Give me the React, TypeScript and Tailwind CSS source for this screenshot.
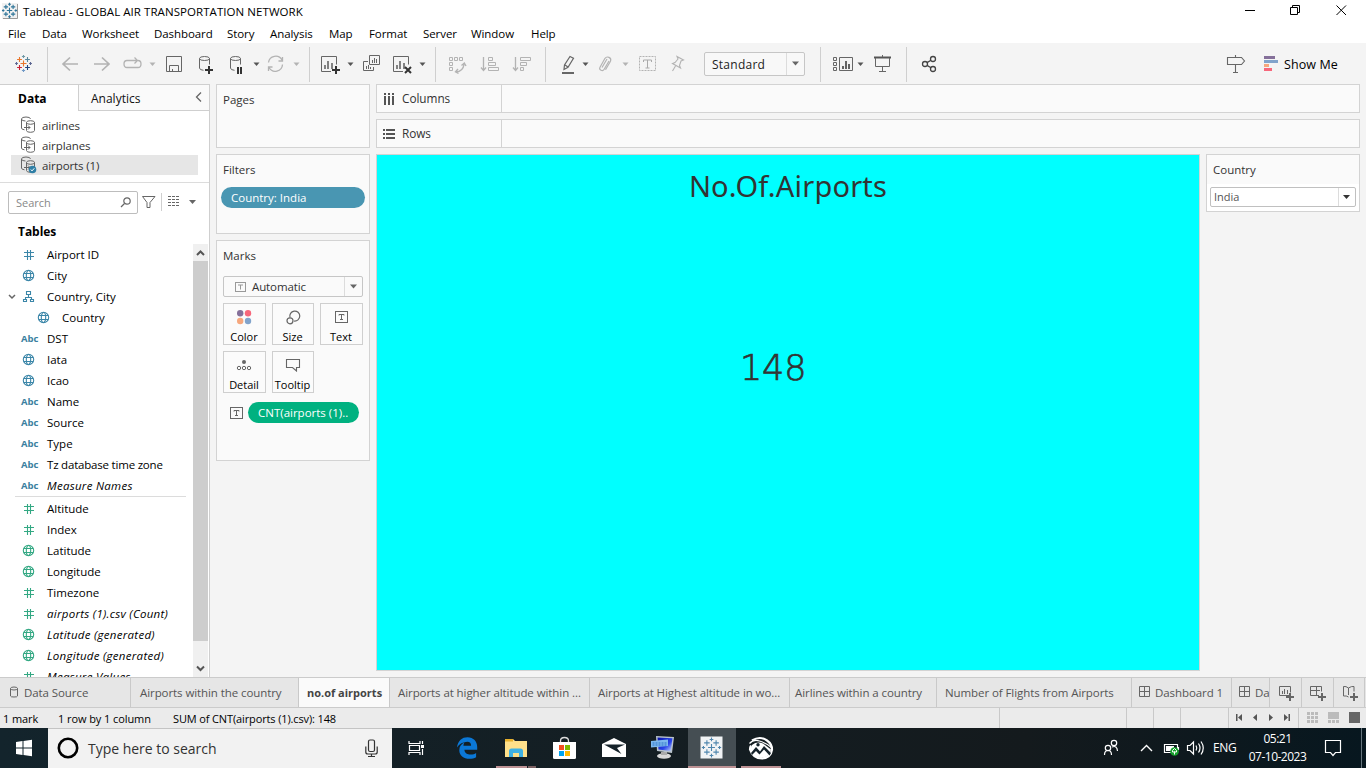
import React from 'react';

type SegProps = { x: number; y: number; w: number; h: number; className?: string; children?: React.ReactNode };

/** A slice of the icon sheet; children are drawn in sheet coordinates. */
function Seg({ x, y, w, h, className = '', children }: SegProps) {
  return (
    <svg width={w} height={h} viewBox={`${x} ${y} ${w} ${h}`} className={`block shrink-0 ${className}`} fill="none">
      {children}
    </svg>
  );
}

function Bar({ x, w, children }: { x: number; w: number; children?: React.ReactNode }) {
  return (
    <Seg x={x} y={43} w={w} h={41}>
      {children}
    </Seg>
  );
}

const Caret = ({ x, y, c = '#555' }: { x: number; y: number; c?: string }) => (
  <path d={`M${x - 3} ${y - 1.5}h6l-3 3.5z`} fill={c} />
);
const Divider = ({ x }: { x: number }) => <path d={`M${x + 0.5} 47V82`} stroke="#cfcfcf" />;

const crosses: [number, number, number, string][] = [
  [0, 0, 3, '#e8762c'],
  [-4, -4, 2.4, '#e8762c'],
  [4, -4, 2.4, '#59879b'],
  [-4, 4, 2.4, '#c72035'],
  [4, 4, 2.4, '#1f447e'],
  [0, -7, 1.6, '#7099a6'],
  [0, 7, 1.6, '#7099c6'],
  [-7, 0, 1.4, '#5b6591'],
  [7, 0, 1.4, '#5b6591'],
];

function Crosses({ cx, cy, s = 1, mono }: { cx: number; cy: number; s?: number; mono?: string }) {
  return (
    <g strokeWidth={1.1}>
      {crosses.map(([dx, dy, r, c], i) => (
        <path
          key={i}
          stroke={mono ?? c}
          d={`M${cx + dx * s - r * s} ${cy + dy * s}h${2 * r * s}M${cx + dx * s} ${cy + dy * s - r * s}v${2 * r * s}`}
        />
      ))}
    </g>
  );
}

const Cylinder = ({ x, y }: { x: number; y: number }) => (
  <g stroke="#666">
    <ellipse cx={x + 5.5} cy={y + 2.5} rx="5" ry="2" />
    <path d={`M${x + 0.5} ${y + 2.5}v9.5q0 2 4 2.3M${x + 10.5} ${y + 2.5}v6`} />
  </g>
);

const ChartBox = ({ x, y }: { x: number; y: number }) => (
  <g>
    <path d={`M${x + 10} ${y + 15.5}h-9.5v-15h15v8`} stroke="#666" />
    <path d={`M${x + 4} ${y + 13}v-4M${x + 7} ${y + 13}v-8M${x + 11} ${y + 13}v-6`} stroke="#666" strokeWidth="1.6" />
  </g>
);

const menu: [string, string][] = [
  ['File', 'w-[34px]'],
  ['Data', 'w-[40px]'],
  ['Worksheet', 'w-[72px]'],
  ['Dashboard', 'w-[73px]'],
  ['Story', 'w-[43px]'],
  ['Analysis', 'w-[59px]'],
  ['Map', 'w-[40px]'],
  ['Format', 'w-[54px]'],
  ['Server', 'w-[48px]'],
  ['Window', 'w-[60px]'],
  ['Help', 'w-[40px]'],
];

function TitleBar() {
  return (
    <header className="flex h-[22px] shrink-0 bg-white">
      <Seg x={0} y={0} w={23} h={22}>
        <rect x="2" y="3" width="16" height="16" fill="#f1f1f1" />
        <path d="M3 18.5H17.5V4" stroke="#999" />
        <Crosses cx={9.5} cy={10.5} s={0.9} mono="#2f7599" />
      </Seg>
      <span className="flex-1 pt-[3px] text-[11.5px] leading-[17px] tracking-[0.06px] text-black">Tableau - GLOBAL AIR TRANSPORTATION NETWORK</span>
      <Seg x={1236} y={0} w={130} h={22}>
        <g stroke="#000">
          <path d="M1245 10.500h10M1290.500 7.500h7v7h-7zM1292.500 7V5.500h7v7H1298M1336.500 5.500l9.500 9.500M1346 5.500l-9.500 9.500" />
        </g>
      </Seg>
    </header>
  );
}

function Toolbar() {
  return (
    <div className="flex h-[41px] shrink-0 bg-[#f4f4f4]">
      <Bar x={0} w={55}>
        <Crosses cx={23.5} cy={63.5} />
        <Divider x={47} />
      </Bar>
      <Bar x={55} w={105}>
        <g stroke="#b3b3b3" strokeWidth="1.7">
          <path d="M78 64H63M70 57.500L63 64L70 70.500M94 64h15M102 57.500L109 64L102 70.500" />
        </g>
        <path d="M132 60.500h-5q-3 0-3 3.500t3 3.500h11q3 0 3-3.500t-3-3.500M131 60.500h6M134.500 57.500l3 3l-3 3" stroke="#b3b3b3" strokeWidth="1.3" />
        <Caret x={152.500} y={64} c="#b3b3b3" />
      </Bar>
      <Bar x={160} w={30}>
        <path d="M166.500 56.500h15v15h-15zM169.500 71v-5.500h9V71M172.500 71v-2" stroke="#666" />
      </Bar>
      <Bar x={190} w={70}>
        <Cylinder x={199} y={56} />
        <path d="M205 70h8M209 66v8" stroke="#333" strokeWidth="2" />
        <Cylinder x={230} y={56} />
        <path d="M238 67v7M241 67v7" stroke="#333" strokeWidth="2" />
        <Caret x={256.500} y={64} />
      </Bar>
      <Bar x={260} w={55}>
        <g stroke="#b3b3b3" strokeWidth="1.3">
          <path d="M268.500 62.500a7.200 7.200 0 0 1 13.500-2.500M282.500 64.500a7.200 7.200 0 0 1-13.500 3M282.500 57v4h-4M268.500 71v-4h4" />
        </g>
        <Caret x={296.500} y={64} c="#b3b3b3" />
        <Divider x={309} />
      </Bar>
      <Bar x={315} w={125}>
        <ChartBox x={321} y={56} />
        <path d="M332 70h8M336 66v8" stroke="#333" strokeWidth="2" />
        <Caret x={350.500} y={64} />
        <path d="M369.500 55.500h10v9h-10zM368 61.500h-4.500v9h10V67" stroke="#666" />
        <path d="M372.500 63v-3M374.500 63v-5M376.500 63v-4M366.500 69v-3M368.500 69v-4M370.500 69v-2" stroke="#666" />
        <ChartBox x={393} y={56} />
        <path d="M405 67l6 6M411 67l-6 6" stroke="#333" strokeWidth="2" />
        <Caret x={422.500} y={64} />
        <Divider x={435} />
      </Bar>
      <Bar x={440} w={111}>
        <g stroke="#b3b3b3">
          <path d="M449.500 57.500h3v3h-3zM454.500 57.500h3v3h-3zM459.500 57.500h3v3h-3zM449.500 62.500h3v3h-3zM449.500 67.500h3v3h-3z" />
          <path d="M464 64.500q-1 7-8 7.500M461.500 65.500l2.800-2.500l1.700 3M458 69l-2.500 2.800l3 1.700" strokeWidth="1.400" />
          <path d="M483.500 57v13M481 67.500l2.500 3l2.500-3M515.500 57v13M513 67.500l2.500 3l2.500-3" strokeWidth="1.300" />
          <path d="M488.500 57.500h4v3h-4zM488.500 62.500h7v3h-7zM488.500 67.500h10v3h-10zM520.500 57.500h10v3h-10zM520.500 62.500h6v3h-6zM520.500 67.500h3v3h-3z" />
        </g>
        <Divider x={545} />
      </Bar>
      <Bar x={551} w={153}>
        <path d="M570 56.500l3.500 1.800l-5.500 9l-4 2.200l.5-4.500zM565 65l3 2" stroke="#666" strokeWidth="1.200" />
        <path d="M562 73h12" stroke="#666" strokeWidth="2" />
        <Caret x={585.500} y={64} />
        <path d="M609 61l-5 8.500q-1 1.800-3 .8t-1-3l5-9q1.500-2 4-.9t1.500 3.800l-5 8.500M607 59l-5 8.500" stroke="#b3b3b3" strokeWidth="1.200" />
        <Caret x={625.500} y={64} c="#b3b3b3" />
        <rect x="639.500" y="56.500" width="16" height="14" stroke="#b3b3b3" strokeDasharray="2 1" />
        <path d="M643.500 62v-2h8v2M647.500 60v8M645.500 68h4" stroke="#aaa" />
        <path d="M677 56.500l6.500 3.500l-2.500 1l-1.500 4.500l1 2.500l-8-4.500l2.500-1l3-3.500zM675.500 66l-3 5" stroke="#b3b3b3" strokeWidth="1.100" />
      </Bar>
      <div className="mt-[9px] flex h-[24px] w-[101px] shrink-0 rounded-[2px] border border-[#c6c6c6] bg-[#f8f8f8]">
        <span className="w-[82px] border-r border-[#dcdcdc] pl-[7px] text-[12px] leading-[23px] tracking-[0.250px] text-[#222]">Standard</span>
        <Seg x={787} y={53} w={17} h={21}>
          <path d="M792 61.500h7l-3.500 4z" fill="#666" />
        </Seg>
      </div>
      <Bar x={805} w={150}>
        <Divider x={820} />
        <path d="M833.500 57.500h3v3h-3zM833.500 62.500h3v3h-3zM833.500 67.500h3v3h-3zM839.500 57.500h13v13h-13z" stroke="#666" />
        <path d="M843 69v-3M846 69v-8M849 69v-5" stroke="#555" strokeWidth="1.800" />
        <Caret x={860.500} y={64} />
        <path d="M874 57.500h17" stroke="#555" strokeWidth="2" />
        <path d="M875.500 58v8.500h14V58M882.500 55v2M882.500 67v5M879 71.500h7" stroke="#666" />
        <Divider x={906} />
        <g stroke="#444" strokeWidth="1.300">
          <circle cx="925" cy="64" r="2.500" />
          <circle cx="933" cy="59" r="2.500" />
          <circle cx="933" cy="69" r="2.500" />
          <path d="M927 62.600l4-2.400M927 65.400l4 2.400" />
        </g>
      </Bar>
      <div className="flex-1" />
      <Bar x={1216} w={68}>
        <path d="M1227.500 57.500h14l3 3.500l-3 3.500h-14zM1235.500 55v2M1235.500 65v7M1233 72.500h5" stroke="#666" strokeWidth="1.100" />
        <path d="M1264 56h11v3h-11z" fill="#85709a" />
        <path d="M1264 60h14v3h-14z" fill="#81a3cb" />
        <path d="M1264 64h5v3h-5z" fill="#f6a77d" />
        <path d="M1264 68h8v3h-8z" fill="#f7677b" />
      </Bar>
      <span className="w-[82px] shrink-0 pt-px text-[12.500px] leading-[42px] tracking-[0.100px] text-black">Show Me</span>
    </div>
  );
}

type Kind = 'num' | 'geo' | 'abc' | 'tree';
type Field = { name: string; kind: Kind; italic?: boolean; child?: boolean; open?: boolean; tight?: boolean };

const dims: Field[] = [
  { name: 'Airport ID', kind: 'num' },
  { name: 'City', kind: 'geo' },
  { name: 'Country, City', kind: 'tree', open: true },
  { name: 'Country', kind: 'geo', child: true },
  { name: 'DST', kind: 'abc' },
  { name: 'Iata', kind: 'geo' },
  { name: 'Icao', kind: 'geo' },
  { name: 'Name', kind: 'abc' },
  { name: 'Source', kind: 'abc' },
  { name: 'Type', kind: 'abc' },
  { name: 'Tz database time zone', kind: 'abc', tight: true },
  { name: 'Measure Names', kind: 'abc', italic: true },
];
const measures: Field[] = [
  { name: 'Altitude', kind: 'num' },
  { name: 'Index', kind: 'num' },
  { name: 'Latitude', kind: 'geo' },
  { name: 'Longitude', kind: 'geo' },
  { name: 'Timezone', kind: 'num' },
  { name: 'airports (1).csv (Count)', kind: 'num', italic: true },
  { name: 'Latitude (generated)', kind: 'geo', italic: true },
  { name: 'Longitude (generated)', kind: 'geo', italic: true },
  { name: 'Measure Values', kind: 'num', italic: true },
];

function FieldRow({ f, color }: { f: Field; color: string }) {
  return (
    <div className={`flex h-[21px] shrink-0 items-center ${f.child ? 'pl-[15px]' : ''}`}>
      <span className="flex w-[21px] justify-center pl-[2px]">
        {f.open && (
          <svg width="8" height="6" fill="none">
            <path d="M1 1l3 3l3-3" stroke="#666" strokeWidth="1.500" />
          </svg>
        )}
      </span>
      <span className="w-[26px] shrink-0">
        {f.kind === 'abc' ? (
          <span className="block text-[9.500px] font-bold leading-[21px] text-[#3b7f9f]">Abc</span>
        ) : (
          <svg width="16" height="14" fill="none" stroke={color} strokeWidth="1.100">
            {f.kind === 'num' && <path d="M6.500 2v10M9.500 2v10M3 4.500h10M3 8.500h10" />}
            {f.kind === 'geo' && (
              <>
                <circle cx="7.500" cy="6.500" r="5.200" />
                <ellipse cx="7.500" cy="6.500" rx="2.200" ry="5" />
                <path d="M3 4.500h9M3 8.500h9" />
              </>
            )}
            {f.kind === 'tree' && <path d="M5.500 1.500h4v3h-4zM7.500 4.500v3M4.500 9.500v-2h6v2M2.500 9.500h3v2h-3zM9.500 9.500h3v2h-3z" />}
          </svg>
        )}
      </span>
      <span
        className={`whitespace-nowrap pt-px text-[11.500px] leading-[20px] text-black ${f.italic ? 'italic tracking-[0.280px]' : ''} ${f.tight ? 'tracking-[-0.200px]' : ''}`}
      >
        {f.name}
      </span>
    </div>
  );
}

function SourceRow({ name, active }: { name: string; active?: boolean }) {
  return (
    <div className={`ml-[11px] flex h-5 w-[187px] items-center ${active ? 'bg-[#e6e6e6]' : ''}`}>
      <svg width="31" height="20" fill="none" stroke="#666">
        <path d="M14.500 5q0-2-4.500-2t-4.500 2v9q0 1.500 3 1.800M5.500 5q0 2 4 2" transform="translate(5 -1)" />
        <path d="M16.500 7.500q0-1.800 4-1.800t4 1.800v8q0 1.800-4 1.800t-4-1.800zM16.500 7.500q0 1.800 4 1.800t4-1.800M14 12.500h6M18 10.500l2 2l-2 2" transform="translate(-1 0)" />
        {active && (
          <>
            <circle cx="21.500" cy="14.500" r="3.800" fill="#2f7fa6" stroke="none" />
            <path d="M19.800 14.500l1.200 1.400l2.300-2.600" stroke="#fff" />
          </>
        )}
      </svg>
      <span className="pt-px text-[11.500px] tracking-[-0.100px] text-[#333]">{name}</span>
    </div>
  );
}

function DataPane() {
  return (
    <aside className="flex w-[210px] shrink-0 flex-col overflow-hidden border-r border-t border-[#cfcfcf] bg-white">
      <div className="flex h-[26px] shrink-0">
        <span className="w-[78px] pl-[18px] text-[12px] font-bold leading-[27px] text-black">Data</span>
        <span className="flex flex-1 justify-between border-b border-l border-[#cfcfcf] bg-[#fafafa] pl-3 text-[12px] leading-[27px] text-[#111]">
          Analytics
          <svg width="18" height="24" fill="none" stroke="#666" strokeWidth="1.300">
            <path d="M10 7.500l-4.500 4.500l4.500 4.500" />
          </svg>
        </span>
      </div>
      <div className="h-[72px] shrink-0 border-b border-[#dcdcdc] pt-[4px]">
        <SourceRow name="airlines" />
        <SourceRow name="airplanes" />
        <SourceRow name="airports (1)" active />
      </div>
      <div className="flex h-[38px] shrink-0 pt-[8px]">
        <div className="ml-2 flex h-[23px] w-[130px] rounded-[2px] border border-[#bdbdbd] pl-[7px] text-[11px] leading-[22px] text-[#888]">
          <span className="flex-1">Search</span>
          <svg width="18" height="21" fill="none" stroke="#666" strokeWidth="1.200">
            <circle cx="8" cy="9" r="3.200" />
            <path d="M5.500 11.500l-3.500 3.500" />
          </svg>
        </div>
        <Seg x={138} y={191} w={70} h={24}>
          <path d="M142.500 196.500h12.500l-5 6v5h-3v-5z" stroke="#666" />
          <path d="M161.500 193v18" stroke="#cfcfcf" />
          <path d="M168 197.500h12M168 200.500h12M168 203.500h12M168 206.500h12" stroke="#666" strokeDasharray="3 1" transform="translate(0 -1)" />
          <path d="M189 200h7l-3.500 4z" fill="#666" />
        </Seg>
      </div>
      <div className="h-[23px] shrink-0 pl-[18px] text-[12px] font-bold leading-[21px] tracking-[-0.050px] text-black">Tables</div>
      <div className="flex min-h-0 flex-1">
        <div className="flex w-[193px] shrink-0 flex-col overflow-hidden">
          {dims.map((f) => (
            <FieldRow key={f.name} f={f} color="#3b86a8" />
          ))}
          <div className="ml-[15px] mr-[7px] h-px shrink-0 bg-[#dcdcdc]" />
          <div className="h-px shrink-0" />
          {measures.map((f) => (
            <FieldRow key={f.name} f={f} color="#33a883" />
          ))}
        </div>
        <div className="flex w-[15px] flex-col bg-[#f0f0f0]">
          <svg width="15" height="17" className="shrink-0" fill="none" stroke="#555" strokeWidth="2">
            <path d="M4 11l3.500-3.500l3.500 3.500" />
          </svg>
          <div className="h-[380px] shrink-0 bg-[#cdcdcd]" />
          <svg width="15" height="34" className="shrink-0" fill="none" stroke="#555" strokeWidth="2">
            <path d="M4 25.500l3.500 3.500l3.500-3.500" />
          </svg>
        </div>
      </div>
    </aside>
  );
}

const TBox = ({ c = '#666' }: { c?: string }) => (
  <svg width="13" height="12" fill="none" stroke={c}>
    <rect x=".5" y=".5" width="12" height="11" />
    <path d="M4 4.500v-1h5v1M6.500 3.500v5M5 8.500h3" />
  </svg>
);

function MarkButton({ label, wide, children }: { label: string; wide?: boolean; children: React.ReactNode }) {
  return (
    <button className={`flex h-[42px] flex-col items-center border border-[#cfcfcf] bg-[#fbfbfb] pr-px ${wide ? 'w-[43px]' : 'w-[42px]'}`}>
      <span className="flex h-[25px] items-center pt-px">{children}</span>
      <span className="whitespace-nowrap text-[11px] leading-[15px] text-black">{label}</span>
    </button>
  );
}

function Shelves() {
  return (
    <section className="flex w-[154px] shrink-0 flex-col gap-[6px] text-[11.500px] text-[#333]">
      <div className="h-[64px] border border-[#d3d3d3] bg-[#fafafa] pl-[6px] leading-[30px]">Pages</div>
      <div className="h-[80px] border border-[#d3d3d3] bg-[#fafafa]">
        <div className="h-[32px] pl-[6px] leading-[30px]">Filters</div>
        <div className="ml-[4px] h-[21px] w-[144px] rounded-full bg-[#4996b2] pl-[10px] text-[11.500px] leading-[21px] text-white">Country: India</div>
      </div>
      <div className="h-[221px] border border-[#d3d3d3] bg-[#fafafa] pl-[6px]">
        <div className="h-[35px] leading-[30px]">Marks</div>
        <div className="flex h-[21px] w-[140px] items-center rounded-[2px] border border-[#c6c6c6]">
          <span className="flex h-full w-[121px] items-center gap-[6px] border-r border-[#dcdcdc] pl-[11px] leading-[19px] tracking-[-0.100px]">
            <svg width="11" height="10" fill="none" stroke="#999">
              <rect x=".5" y=".5" width="10" height="9" />
              <path d="M3 3h5M5.500 3v4.500" />
            </svg>
            Automatic
          </span>
          <svg width="17" height="19">
            <path d="M5 7.500h7l-3.500 4z" fill="#666" />
          </svg>
        </div>
        <div className="mt-[6px] flex gap-[6px]">
          <MarkButton label="Color" wide>
            <svg width="16" height="16">
              <circle cx="4.200" cy="4.200" r="3.200" fill="#85709a" />
              <circle cx="12" cy="4.200" r="3.200" fill="#f7677b" />
              <circle cx="4.200" cy="12" r="3.200" fill="#f6a77d" />
              <circle cx="12" cy="12" r="3.200" fill="#81a3cb" />
            </svg>
          </MarkButton>
          <MarkButton label="Size">
            <svg width="16" height="16" fill="none" stroke="#666" strokeWidth="1.200">
              <path d="M5 8.500a5 5 0 1 1 4 3.500" />
              <circle cx="5" cy="11.800" r="3" />
            </svg>
          </MarkButton>
          <MarkButton label="Text" wide>
            <TBox />
          </MarkButton>
        </div>
        <div className="mt-[6px] flex gap-[6px]">
          <MarkButton label="Detail" wide>
            <svg width="16" height="12" fill="none" stroke="#666">
              <circle cx="8" cy="3" r="2" fill="#666" stroke="none" />
              <circle cx="3" cy="9" r="1.700" />
              <circle cx="8" cy="9" r="1.700" />
              <circle cx="13" cy="9" r="1.700" />
            </svg>
          </MarkButton>
          <MarkButton label="Tooltip">
            <svg width="16" height="14" fill="none" stroke="#666" strokeWidth="1.100">
              <path d="M1.500 1.500h13v8h-3v3.500l-4-3.500h-6z" />
            </svg>
          </MarkButton>
        </div>
        <div className="mt-[9px] flex items-center pl-[7px]">
          <TBox />
          <span className="ml-[5px] h-[21px] w-[111px] rounded-full bg-[#00b180] pl-[10px] text-[11.500px] leading-[21px] text-white">CNT(airports (1)..</span>
        </div>
      </div>
    </section>
  );
}

function Shelf({ label, children }: { label: string; children: React.ReactNode }) {
  return (
    <div className="flex h-[29px] shrink-0 border border-[#d3d3d3] bg-[#fafafa]">
      <span className="flex w-[125px] items-center gap-[6px] border-r border-[#d3d3d3] pl-[6px] text-[11.800px] tracking-[-0.050px] text-[#333]">
        <svg width="13" height="12" stroke="#555" fill="none" strokeWidth="2">
          {children}
        </svg>
        {label}
      </span>
    </div>
  );
}

function Workspace() {
  return (
    <main className="flex min-w-0 flex-1 flex-col pr-[6px]">
      <Shelf label="Columns">
        <path d="M2 0v2M6 0v2M10 0v2M2 3v9M6 3v9M10 3v9" />
      </Shelf>
      <div className="h-[6px]" />
      <Shelf label="Rows">
        <path d="M0 2h2M0 6h2M0 10h2M3 2h9M3 6h9M3 10h9" />
      </Shelf>
      <div className="mt-[6px] flex items-start gap-[6px]">
        <div className="flex h-[517px] w-[824px] flex-col border border-[#d3d3d3] bg-[#00ffff] text-[#333]">
          <div className="pt-[11px] text-center text-[29px] font-[450] leading-[40px] tracking-[0.200px]" style={{ fontFamily: '"Noto Sans", sans-serif' }}>
            No.Of.Airports
          </div>
          <div
            className="mt-[142px] pl-[363px] text-[35px] font-extralight leading-[40px] tracking-[-0.200px] [-webkit-text-stroke:0.700px_#333]"
            style={{ fontFamily: '"DejaVu Sans", sans-serif' }}
          >
            148
          </div>
        </div>
        <div className="h-[58px] w-[154px] border border-[#d3d3d3] bg-white text-[11.500px] text-[#333]">
          <div className="h-[29px] bg-[#fafafa] pl-[6px] leading-[30px]">Country</div>
          <div className="ml-[3px] mt-[3px] flex h-5 w-[146px] rounded-[2px] border border-[#c0c0c0]">
            <span className="w-[128px] border-r border-[#dcdcdc] pl-[3px] text-[11px] leading-[18px] text-[#555]">India</span>
            <svg width="16" height="18">
              <path d="M4 7h7l-3.500 4z" fill="#333" />
            </svg>
          </div>
        </div>
      </div>
    </main>
  );
}

const tabs: { name: string; w: string; pad: string; active?: boolean; icon?: 'db' | 'grid' }[] = [
  { name: 'Data Source', w: 'w-[131px]', pad: 'pl-[9px]', icon: 'db' },
  { name: 'Airports within the country', w: 'w-[168px]', pad: 'pl-[9px]' },
  { name: 'no.of airports', w: 'w-[91px]', pad: 'pl-[8px]', active: true },
  { name: 'Airports at higher altitude within ...', w: 'w-[200px]', pad: 'pl-[8px]' },
  { name: 'Airports at Highest altitude in wo...', w: 'w-[200px]', pad: 'pl-[8px]' },
  { name: 'Airlines within a country', w: 'w-[147px]', pad: 'pl-[5px]' },
  { name: 'Number of Flights from Airports', w: 'w-[195px]', pad: 'pl-[8px]' },
  { name: 'Dashboard 1', w: 'w-[100px]', pad: 'pl-[6px]', icon: 'grid' },
  { name: 'Da', w: 'w-[38px]', pad: 'pl-[6px]', icon: 'grid' },
];

function SheetTabs() {
  return (
    <nav className="flex h-[31px] shrink-0 overflow-hidden border-b border-t border-[#cbcbcb] bg-[#e6e6e6] text-[11.500px] leading-[29px] tracking-[-0.080px] text-[#555]">
      {tabs.map((t) => (
        <span
          key={t.name}
          className={`flex shrink-0 items-center overflow-hidden whitespace-nowrap border-r border-[#c9c9c9] ${t.w} ${t.pad} ${t.active ? 'bg-[#fafafa] text-[11px] font-bold tracking-[0px] text-[#444]' : ''}`}
        >
          {t.icon === 'db' && (
            <svg width="9" height="12" className="mb-[2px] mr-[6px] shrink-0" fill="none" stroke="#666">
              <path d="M1.500 2.500q0-1.500 3.500-1.500t3.500 1.500v7.500q0 1-3.500 1t-3.500-1zM1.500 2.500q0 1.500 3.500 1.500t3.500-1.500" />
            </svg>
          )}
          {t.icon === 'grid' && (
            <svg width="12" height="12" className="mb-[2px] ml-[1px] mr-[4px] shrink-0" fill="none" stroke="#666">
              <path d="M.5.500h10v10h-10zM5.500.500v10M.5 5.500h10" />
            </svg>
          )}
          {t.name}
        </span>
      ))}
      <Seg x={1270} y={678} w={96} h={29}>
        <g stroke="#666">
          <path d="M1289 695.500h-9.500v-9h11v6M1282.500 694v-3M1284.500 694v-5M1287.500 694v-4" />
          <path d="M1319 695.500h-8.500v-9h11v5M1316.500 686v9M1311 690.500h9" />
          <path d="M1348.500 695v-7q-2.500-2-5-1.500v9.500q3-.5 5 1M1348.500 688q3-2 5.500-1.500v5" />
          <path d="M1286 697h8M1290 693v8M1318 697h8M1322 693v8M1350 697h8M1354 693v8" strokeWidth="2" />
        </g>
        <path d="M1301.500 678v29M1333.500 678v29M1364.500 678v29" stroke="#c9c9c9" />
      </Seg>
    </nav>
  );
}

function StatusBar() {
  return (
    <div className="flex h-[20px] shrink-0 bg-[#ebebeb] text-[11px] leading-[22px] tracking-[-0.080px] text-black">
      <span className="w-[55px] pl-[3px]">1 mark</span>
      <span className="w-[115px] pl-[3px]">1 row by 1 column</span>
      <span className="flex-1 pl-[3px] tracking-[-0.130px]">SUM of CNT(airports (1).csv): 148</span>
      <Seg x={990} y={708} w={376} h={20}>
        <path d="M999.500 708v20M1126.500 708v20M1153.500 708v20M1180.500 708v20M1228.500 708v20M1298.500 708v20" stroke="#c9c9c9" />
        <path d="M1236 714h1.500v7h-1.500zM1242 714v7l-4-3.500zM1257 714v7l-4-3.500zM1269 714v7l4-3.500zM1284 714v7l4-3.500zM1288.500 714h1.500v7h-1.500z" fill="#555" />
        <path d="M1307 712h3v3h-3zM1311 712h3v3h-3zM1315 712h3v3h-3zM1307 716h3v3h-3zM1311 716h3v3h-3zM1315 716h3v3h-3zM1307 720h3v3h-3zM1311 720h3v3h-3zM1315 720h3v3h-3zM1328 712h11v7h-11zM1328 720h3v3h-3zM1332 720h3v3h-3zM1336 720h3v3h-3z" fill="#bbb" />
        <path d="M1349 712h11v11h-11z" fill="#666" />
      </Seg>
    </div>
  );
}

function Taskbar() {
  return (
    <footer className="flex h-10 shrink-0 bg-linear-to-r from-[#13242c] via-[#141a1d] via-75% to-[#07171f] text-white">
      <Seg x={0} y={728} w={48} h={40}>
        <path d="M16 742l6.500-.9v6.400H16zM23.500 741l8.500-1.200v7.700h-8.500zM16 748.500h6.500v6.400l-6.500-.9zM23.500 748.500h8.500v7.700l-8.500-1.200z" fill="#fff" />
      </Seg>
      <div className="flex w-[344px] shrink-0 items-center border-t border-[#c4c4c4] bg-[#f2f2f2]">
        <svg width="40" height="39" fill="none" stroke="#000" strokeWidth="2.600">
          <circle cx="20" cy="19" r="9.200" />
        </svg>
        <span className="flex-1 text-[14px] tracking-[-0.020px] text-[#333]">Type here to search</span>
        <svg width="41" height="39" fill="none" stroke="#333" strokeWidth="1.200">
          <rect x="17.500" y="11" width="6" height="11.500" rx="1.500" />
          <path d="M14.800 17.500v5.500q0 2 2 2h7.400q2 0 2-2v-5.500M20.500 25v2.500M17 27.500h7" />
        </svg>
      </div>
      <Seg x={392} y={728} w={54} h={40}>
        <path d="M409 741v2.500h11V741M409 755v-2.500h11V755M409.500 745.500h10v5h-10zM422.500 741v3M422.500 749v6" stroke="#fff" strokeWidth="1.200" />
        <rect x="421" y="745" width="3" height="3" fill="#fff" />
      </Seg>
      <Seg x={446} y={728} w={194} h={40}>
        <path d="M457 747.500c1-7 5-10.200 10.500-10.200c6 0 9.700 4.200 9.700 9.800v2.600h-12.800c.2 3.300 3 4.800 6.200 4.800c2.400 0 4-.5 5.500-1.500v4.300c-1.800 1.100-4 1.500-6.600 1.500c-6 0-10.200-3.300-10.200-8.600c0-3.600 2-6.300 5.200-7.900c-.6.900-1 2.200-1.100 3.500h7.700c0-2.500-1.300-4-3.700-4c-4.500 0-8 2.200-10.400 5.700z" fill="#0b78d7" />
        <path d="M505 739h8l2 2h12v16h-22z" fill="#ffe08a" />
        <path d="M505 739h8v2.500h-8z" fill="#e8b02c" />
        <path d="M509 757v-6q0-2.500 2.500-2.500h9q2.500 0 2.500 2.500v6h-4v-4h-6v4z" fill="#3fb1e3" />
        <path d="M496 766h31v2h-31z" fill="#bd9294" />
        <path d="M528 766h8v2h-8z" fill="#7c6163" />
        <path d="M553 742h23v15.500q0 1.500-1.500 1.500h-20q-1.500 0-1.500-1.500z" fill="#fff" />
        <path d="M560.500 742v-1q0-3.500 4-3.500t4 3.500v1" stroke="#ddd" strokeWidth="1.300" />
        <path d="M559 745h5v5h-5z" fill="#f25022" />
        <path d="M565 745h5v5h-5z" fill="#7fba00" />
        <path d="M559 751h5v5h-5z" fill="#00a4ef" />
        <path d="M565 751h5v5h-5z" fill="#ffb900" />
        <path d="M602 744l12-6l12 6v13h-24z" fill="#fff" />
        <path d="M604 744.500l17.500 9.500l-4.500-6l8-3.500z" fill="#15222a" />
      </Seg>
      <Seg x={640} y={728} w={48} h={40}>
        <defs>
          <linearGradient id="screen" x1="0" y1="0" x2="1" y2="1">
            <stop offset="0" stopColor="#0612a8" />
            <stop offset=".6" stopColor="#2a45e8" />
            <stop offset="1" stopColor="#cfe0ff" />
          </linearGradient>
        </defs>
        <ellipse cx="664" cy="756" rx="7" ry="2.800" fill="#d8d8d8" />
        <path d="M661 752h6v3h-6z" fill="#aaa" />
        <path d="M656 736l18 1l-2 16l-15-2z" fill="#b9c3cc" />
        <path d="M657.500 737.500l15 .8l-1.800 12.800l-12.200-1.500z" fill="url(#screen)" />
        <path d="M651 741l17-1.500v6.500l-17 1.500z" fill="#7db8ee" />
        <path d="M652.500 743h14M652.500 745h14" stroke="#2d72c4" strokeDasharray="2 1" />
      </Seg>
      <Seg x={688} y={728} w={48} h={40} className="bg-[#454e53]">
        <rect x="700.500" y="736.500" width="22" height="22" fill="#f1f3f5" />
        <Crosses cx={711.5} cy={747.5} s={1.150} mono="#4f86ad" />
        <path d="M688 766h48v2h-48z" fill="#bd9294" />
      </Seg>
      <Seg x={736} y={728} w={54} h={40}>
        <path d="M749.500 743.500q4-4.500 10-2.500q8 2.500 12.500 7" stroke="#fff" strokeWidth="1.200" />
        <path d="M752 740.500q8-5 15 0q5 3.500 5 9q-1 8-10 9q-9 0-12-9q0-2.500 1-4" stroke="#fff" strokeWidth="2.200" />
        <path d="M750 750l2-5q5-4 11-1.500l8 6q-1 8-10 8.500q-8-.5-11-8z" fill="#fff" />
        <path d="M751 753l5-6l4 4.500l4-5.500l7 7l-1.500 2.500l-5.500-6l-4.500 5l-3.500-3.500l-4 4z" fill="#15222a" />
        <circle cx="758" cy="744.800" r="1.700" fill="#15222a" />
        <path d="M741 766h40v2h-40z" fill="#bd9294" />
      </Seg>
      <div className="flex-1" />
      <Seg x={1096} y={728} w={112} h={40}>
        <g stroke="#fff" strokeWidth="1.200">
          <circle cx="1108" cy="748" r="2.700" />
          <path d="M1104.500 755q0-4.500 3.500-4.500t3.500 4.500" />
          <circle cx="1114" cy="743" r="2.700" />
          <path d="M1112 747q5-2 5.500 4" />
          <path d="M1141 751l5.500-5.500l5.500 5.500" strokeWidth="1.400" />
          <path d="M1164.500 744.500h13v8h-13zM1178.500 747v3" />
          <path d="M1187.500 745.500h2.500l3.500-3.500v12l-3.500-3.500h-2.500zM1196 745.500q1.500 2.500 0 5M1198.500 743.500q3 4.500 0 9M1201 741.500q4.500 6.500 0 13" />
        </g>
        <path d="M1166 746h8v5h-8z" fill="#fff" />
        <circle cx="1174.500" cy="751.500" r="4.300" fill="#16a02c" />
        <path d="M1174.500 754.500v-3M1172.500 752v-1.500l2-2l2 2v1.500z" stroke="#fff" />
      </Seg>
      <span className="w-[36px] shrink-0 pl-[5px] text-[12px] leading-[40px] tracking-[-0.400px]">ENG</span>
      <span className="w-[67px] shrink-0 pt-[2px] text-center text-[12px] leading-[18px] tracking-[-0.500px]">
        05:21
        <br />
        07-10-2023
      </span>
      <Seg x={1311} y={728} w={55} h={40}>
        <path d="M1325.500 740.500h15v12h-5l-2.500 3l-2.500-3h-5z" stroke="#fff" strokeWidth="1.200" />
        <path d="M1361.500 728v40" stroke="#66757d" />
      </Seg>
    </footer>
  );
}

export default function App() {
  return (
    <div className="flex h-[768px] w-[1366px] flex-col overflow-hidden bg-[#f4f4f4]" style={{ fontFamily: '"Open Sans", "Noto Sans", sans-serif' }}>
      <TitleBar />
      <div className="flex h-[21px] shrink-0 bg-white pl-[8px] text-[11.500px] leading-[23px] tracking-[-0.080px] text-black">
        {menu.map(([m, w]) => (
          <span key={m} className={w}>
            {m}
          </span>
        ))}
      </div>
      <Toolbar />
      <div className="flex h-[593px] shrink-0 gap-[6px]">
        <DataPane />
        <Shelves />
        <Workspace />
      </div>
      <SheetTabs />
      <StatusBar />
      <Taskbar />
    </div>
  );
}
